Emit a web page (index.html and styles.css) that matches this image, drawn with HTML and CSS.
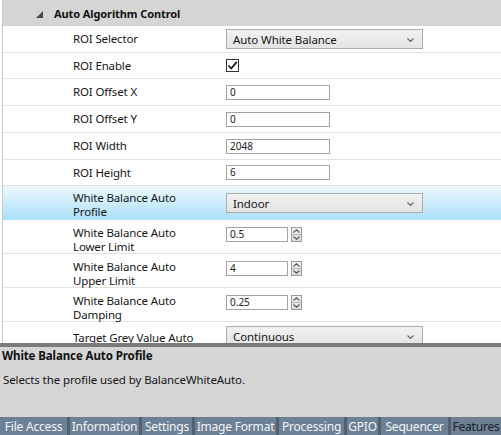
FILE: index.html
```html
<!DOCTYPE html>
<html>
<head>
<meta charset="utf-8">
<link rel="stylesheet" href="styles.css">
</head>
<body>
<div class="app">
  <div class="grid">
    <div class="cat">
      <svg class="expander" width="7" height="7" viewBox="0 0 7 7"><polygon points="7,0 7,7 0,7" fill="#4a4a4a"/></svg>
      <span class="cat-title">Auto Algorithm Control</span>
    </div>
    <div class="row h27">
      <div class="label">ROI Selector</div>
      <div class="value"><div class="combo"><span>Auto White Balance</span><svg class="chev" width="7" height="4" viewBox="0 0 7 4"><polyline points="0.5,0.5 3.5,3.5 6.5,0.5" fill="none" stroke="#6a6a6a" stroke-width="1.2"/></svg></div></div>
    </div>
    <div class="row h26">
      <div class="label">ROI Enable</div>
      <div class="value"><div class="check"><svg width="11" height="11" viewBox="0 0 11 11"><polyline points="1.5,5.5 4.2,8.5 9.8,1.8" fill="none" stroke="#1a1a1a" stroke-width="1.8"/></svg></div></div>
    </div>
    <div class="row h27">
      <div class="label">ROI Offset X</div>
      <div class="value"><div class="textbox">0</div></div>
    </div>
    <div class="row h27">
      <div class="label">ROI Offset Y</div>
      <div class="value"><div class="textbox">0</div></div>
    </div>
    <div class="row h27">
      <div class="label">ROI Width</div>
      <div class="value"><div class="textbox">2048</div></div>
    </div>
    <div class="row h26">
      <div class="label">ROI Height</div>
      <div class="value"><div class="textbox">6</div></div>
    </div>
    <div class="row tall selected">
      <div class="label two">White Balance Auto<br>Profile</div>
      <div class="value top"><div class="combo"><span>Indoor</span><svg class="chev" width="7" height="4" viewBox="0 0 7 4"><polyline points="0.5,0.5 3.5,3.5 6.5,0.5" fill="none" stroke="#6a6a6a" stroke-width="1.2"/></svg></div></div>
    </div>
    <div class="row tall">
      <div class="label two">White Balance Auto<br>Lower Limit</div>
      <div class="value top"><div class="spin"><div class="textbox short">0.5</div><div class="spinbtn"><div class="half"><svg width="7" height="4" viewBox="0 0 7 4"><polyline points="0.5,3.5 3.5,0.8 6.5,3.5" fill="none" stroke="#555" stroke-width="1.1"/></svg></div><div class="half"><svg width="7" height="4" viewBox="0 0 7 4"><polyline points="0.5,0.5 3.5,3.2 6.5,0.5" fill="none" stroke="#555" stroke-width="1.1"/></svg></div></div></div></div>
    </div>
    <div class="row tall">
      <div class="label two">White Balance Auto<br>Upper Limit</div>
      <div class="value top"><div class="spin"><div class="textbox short">4</div><div class="spinbtn"><div class="half"><svg width="7" height="4" viewBox="0 0 7 4"><polyline points="0.5,3.5 3.5,0.8 6.5,3.5" fill="none" stroke="#555" stroke-width="1.1"/></svg></div><div class="half"><svg width="7" height="4" viewBox="0 0 7 4"><polyline points="0.5,0.5 3.5,3.2 6.5,0.5" fill="none" stroke="#555" stroke-width="1.1"/></svg></div></div></div></div>
    </div>
    <div class="row tall">
      <div class="label two">White Balance Auto<br>Damping</div>
      <div class="value top"><div class="spin"><div class="textbox short">0.25</div><div class="spinbtn"><div class="half"><svg width="7" height="4" viewBox="0 0 7 4"><polyline points="0.5,3.5 3.5,0.8 6.5,3.5" fill="none" stroke="#555" stroke-width="1.1"/></svg></div><div class="half"><svg width="7" height="4" viewBox="0 0 7 4"><polyline points="0.5,0.5 3.5,3.2 6.5,0.5" fill="none" stroke="#555" stroke-width="1.1"/></svg></div></div></div></div>
    </div>
    <div class="row last">
      <div class="label lastlabel">Target Grey Value Auto</div>
      <div class="value toplast"><div class="combo"><span>Continuous</span><svg class="chev" width="7" height="4" viewBox="0 0 7 4"><polyline points="0.5,0.5 3.5,3.5 6.5,0.5" fill="none" stroke="#6a6a6a" stroke-width="1.2"/></svg></div></div>
    </div>
  </div>
  <div class="splitter"></div>
  <div class="desc">
    <div class="desc-title">White Balance Auto Profile</div>
    <div class="desc-text">Selects the profile used by BalanceWhiteAuto.</div>
  </div>
  <div class="tabs">
    <div class="tab t1">File Access</div>
    <div class="tab t2">Information</div>
    <div class="tab t3">Settings</div>
    <div class="tab t4">Image Format</div>
    <div class="tab t5">Processing</div>
    <div class="tab t6">GPIO</div>
    <div class="tab t7">Sequencer</div>
    <div class="tab t8 active">Features</div>
  </div>
</div>
</body>
</html>
```
FILE: styles.css
```css
* { box-sizing: border-box; }
html, body { margin: 0; padding: 0; background: #ffffff; }
body {
  font-family: "Noto Sans", "Open Sans", sans-serif;
  font-size: 12px;
  color: #161616;
}
.app {
  width: 501px;
  height: 435px;
  display: flex;
  flex-direction: column;
  overflow: hidden;
}
.grid {
  height: 343px;
  flex: none;
  overflow: hidden;
  margin-left: 2px;
  border-left: 1px solid #c3ccd4;
}
.cat {
  height: 26px;
  background: #d5d5d5;
  display: flex;
  align-items: center;
  padding-left: 33px;
}
.expander { margin-right: 11px; margin-top: 2px; }
.cat-title { font-weight: bold; font-size: 11px; color: #111; letter-spacing: -0.1px; }
.row {
  display: flex;
  align-items: center;
  border-bottom: 1px solid #e3e3e3;
}
.h27 { height: 27px; }
.h26 { height: 26px; }
.tall { height: 34px; }
.last { height: 21px; border-bottom: none; align-items: flex-start; overflow: hidden; }
.selected { background: linear-gradient(#eef8fe, #ade0fa); border-bottom-color: #ade0fa; }
.label {
  width: 223px;
  flex: none;
  padding-left: 70px;
  line-height: 14px;
  font-size: 11.5px;
  letter-spacing: -0.15px;
}
.label.two { align-self: flex-start; padding-top: 6px; }
.selected .label.two { padding-top: 5px; }
.lastlabel { padding-top: 9px; white-space: nowrap; }
.value { flex: 1; display: flex; align-items: center; }
.top { align-self: flex-start; margin-top: 7px; }
.toplast { margin-top: 4px; }
.combo {
  width: 197px;
  height: 20px;
  border: 1px solid #acacac;
  background: linear-gradient(#f1f1f1, #e4e4e4);
  display: flex;
  align-items: center;
  justify-content: space-between;
  padding: 0 8px 0 6px;
  font-size: 11.5px;
  letter-spacing: -0.1px;
}
.chev { margin-top: 1px; }
.check {
  width: 13px;
  height: 13px;
  border: 1px solid #333;
  background: #fff;
  display: flex;
  align-items: center;
  justify-content: center;
}
.textbox {
  width: 104px;
  height: 15px;
  border: 1px solid #a3a3a3;
  background: #fff;
  font-size: 10px;
  line-height: 13px;
  padding-left: 3px;
  color: #222;
}
.textbox.short { width: 62px; }
.spin { display: flex; align-items: center; }
.spinbtn {
  margin-left: 3px;
  width: 11px;
  height: 15px;
  border: 1px solid #9a9a9a;
  background: linear-gradient(#f2f2f2, #dcdcdc);
  display: flex;
  flex-direction: column;
}
.half {
  flex: 1;
  display: flex;
  align-items: center;
  justify-content: center;
}
.half + .half { border-top: 1px solid #b5b5b5; }
.splitter {
  height: 4px;
  flex: none;
  background: #7b7b7b;
}
.desc {
  height: 70px;
  flex: none;
  background: #d5d5d5;
  padding: 2px 0 0 2px;
}
.desc-title { font-weight: bold; font-size: 11.5px; color: #111; line-height: 14px; letter-spacing: -0.1px; }
.desc-text { margin-top: 9px; padding-left: 1px; font-size: 11.5px; letter-spacing: -0.1px; }
.tabs {
  height: 18px;
  flex: none;
  display: flex;
  gap: 3px;
  background: #52606f;
}
.tab {
  flex: none;
  background: #6d8196;
  color: #f2f4f6;
  font-size: 12px;
  line-height: 17px;
  padding-top: 1px;
  text-align: center;
  white-space: nowrap;
  letter-spacing: -0.2px;
}
.t1 { width: 67px; }
.t2 { width: 69px; }
.t3 { width: 50px; }
.t4 { width: 81px; }
.t5 { width: 65px; }
.t6 { width: 31px; }
.t7 { width: 67px; }
.t8 { flex: 1; }
.tab.active { background: #6f8092; color: #14202c; }
```
